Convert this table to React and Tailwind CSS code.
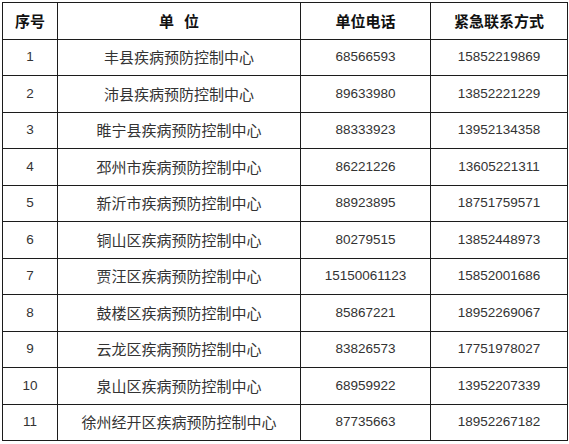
const rows = [
  ['1', '丰县疾病预防控制中心', '68566593', '15852219869'],
  ['2', '沛县疾病预防控制中心', '89633980', '13852221229'],
  ['3', '睢宁县疾病预防控制中心', '88333923', '13952134358'],
  ['4', '邳州市疾病预防控制中心', '86221226', '13605221311'],
  ['5', '新沂市疾病预防控制中心', '88923895', '18751759571'],
  ['6', '铜山区疾病预防控制中心', '80279515', '13852448973'],
  ['7', '贾汪区疾病预防控制中心', '15150061123', '15852001686'],
  ['8', '鼓楼区疾病预防控制中心', '85867221', '18952269067'],
  ['9', '云龙区疾病预防控制中心', '83826573', '17751978027'],
  ['10', '泉山区疾病预防控制中心', '68959922', '13952207339'],
  ['11', '徐州经开区疾病预防控制中心', '87735663', '18952267182'],
]

const cjk = "font-['Noto_Sans_CJK_SC',sans-serif]"
const num = "font-['Liberation_Sans','Noto_Sans_CJK_SC',sans-serif]"

export default function App() {
  return (
    <div className="w-[569px] h-[444px] bg-white pl-[2px] pt-[2px] overflow-hidden">
      <table className="w-[565px] border-collapse table-fixed text-center">
        <colgroup>
          <col className="w-[55px]" />
          <col className="w-[243px]" />
          <col className="w-[130px]" />
          <col className="w-[137px]" />
        </colgroup>
        <thead>
          <tr className="h-[36.5px]">
            <th className={`border border-[#1c1c1c] ${cjk} text-[15px] font-bold text-[#111] p-0`}>序号</th>
            <th className={`border border-[#1c1c1c] ${cjk} text-[15px] font-bold text-[#111] p-0`}>单&nbsp;&nbsp;&nbsp;位</th>
            <th className={`border border-[#1c1c1c] ${cjk} text-[15px] font-bold text-[#111] p-0`}>单位电话</th>
            <th className={`border border-[#1c1c1c] ${cjk} text-[15px] font-bold text-[#111] p-0`}>紧急联系方式</th>
          </tr>
        </thead>
        <tbody>
          {rows.map((r) => (
            <tr key={r[0]} className="h-[36.5px]">
              <td className={`border border-[#1c1c1c] ${num} text-[13.5px] text-[#333] p-0`}>{r[0]}</td>
              <td className={`border border-[#1c1c1c] ${cjk} text-[15px] text-[#333] p-0`}>{r[1]}</td>
              <td className={`border border-[#1c1c1c] ${num} text-[13.5px] text-[#333] p-0`}>{r[2]}</td>
              <td className={`border border-[#1c1c1c] ${num} text-[13.5px] text-[#333] p-0`}>{r[3]}</td>
            </tr>
          ))}
        </tbody>
      </table>
    </div>
  )
}
